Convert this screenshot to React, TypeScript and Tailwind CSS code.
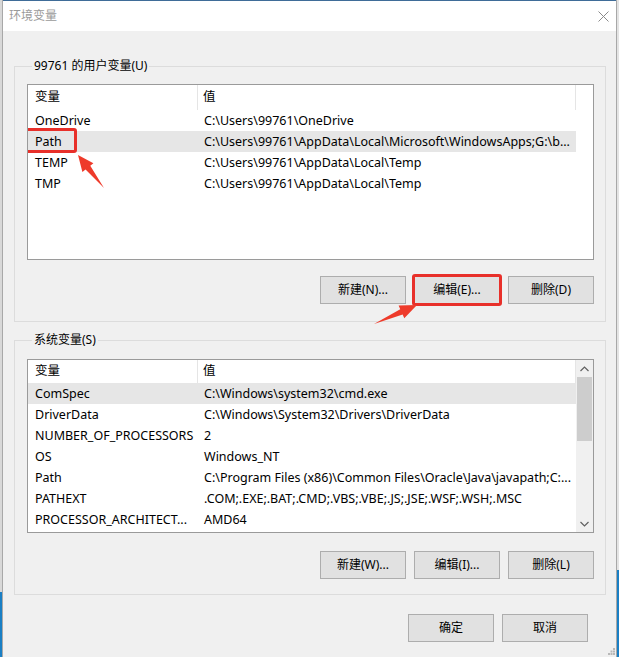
const userVars = [
  ["OneDrive", "C:\\Users\\99761\\OneDrive"],
  ["Path", "C:\\Users\\99761\\AppData\\Local\\Microsoft\\WindowsApps;G:\\b..."],
  ["TEMP", "C:\\Users\\99761\\AppData\\Local\\Temp"],
  ["TMP", "C:\\Users\\99761\\AppData\\Local\\Temp"],
];

const sysVars = [
  ["ComSpec", "C:\\Windows\\system32\\cmd.exe"],
  ["DriverData", "C:\\Windows\\System32\\Drivers\\DriverData"],
  ["NUMBER_OF_PROCESSORS", "2"],
  ["OS", "Windows_NT"],
  ["Path", "C:\\Program Files (x86)\\Common Files\\Oracle\\Java\\javapath;C:..."],
  ["PATHEXT", ".COM;.EXE;.BAT;.CMD;.VBS;.VBE;.JS;.JSE;.WSF;.WSH;.MSC"],
  ["PROCESSOR_ARCHITECT...", "AMD64"],
];

const font = { fontFamily: '"Noto Sans", "Noto Sans CJK SC", sans-serif' };

function arrow(tx: number, ty: number, px: number, py: number, h: number, hw: number, sw: number) {
  const len = Math.hypot(px - tx, py - ty);
  const dx = (px - tx) / len;
  const dy = (py - ty) / len;
  const nx = -dy;
  const ny = dx;
  const bx = px - dx * h;
  const by = py - dy * h;
  const pts = [
    [tx, ty],
    [bx + nx * sw, by + ny * sw],
    [bx + nx * hw, by + ny * hw],
    [px, py],
    [bx - nx * hw, by - ny * hw],
    [bx - nx * sw, by - ny * sw],
  ];
  return pts.map((p) => p.join(",")).join(" ");
}

function Btn({ label, boxed }: { label: string; boxed?: boolean }) {
  return (
    <div className="relative">
      <button className="w-[86px] h-[28px] bg-[#e1e1e1] border border-[#adadad] text-[12px] text-black leading-none">{label}</button>
      {boxed && <div className="absolute -inset-[2px] border-[3px] border-[#e8302a] rounded-[3px] pointer-events-none" />}
    </div>
  );
}

function VarList({ rows, height, headerH, scroll, selected, marked }: { rows: string[][]; height: string; headerH: string; scroll?: boolean; selected: number; marked?: number }) {
  return (
    <div className={`${height} bg-white border border-[#9a9a9a] flex overflow-hidden`}>
      <div className="w-[548px] flex flex-col">
        <div className={`${headerH} flex text-[12.5px] text-black`}>
          <div className="w-[170px] pl-[7px] border-r border-[#e5e5e5] flex items-center">变量</div>
          <div className="w-[378px] pl-[5px] border-r border-[#e5e5e5] flex items-center">值</div>
        </div>
        {rows.map(([k, v], i) => (
          <div key={k + i} className={`h-[21px] shrink-0 flex text-[12.5px] leading-[21px] text-black whitespace-nowrap ${i === selected ? "bg-[#e6e6e6]" : ""}`}>
            <div className="w-[170px] pl-[7px] relative">
              {k}
              {i === marked && <div className="absolute left-[-6px] top-[-3px] w-[55px] h-[25px] border-[3px] border-[#e8302a] rounded-[3px]" />}
            </div>
            <div className="w-[378px] pl-[6px] overflow-hidden">{v}</div>
          </div>
        ))}
      </div>
      <div className="w-[17px] flex flex-col">
        {scroll && (
          <div className="flex-1 bg-[#f0f0f0] flex flex-col">
            <div className="h-[17px] flex items-center justify-center">
              <svg width="9" height="6" viewBox="0 0 9 6"><path d="M0.5 5 L4.5 1 L8.5 5" fill="none" stroke="#606060" strokeWidth="1.2" /></svg>
            </div>
            <div className="h-[64px] mx-[1px] bg-[#cdcdcd]" />
            <div className="flex-1" />
            <div className="h-[17px] flex items-center justify-center">
              <svg width="9" height="6" viewBox="0 0 9 6"><path d="M0.5 1 L4.5 5 L8.5 1" fill="none" stroke="#606060" strokeWidth="1.2" /></svg>
            </div>
          </div>
        )}
      </div>
    </div>
  );
}

export default function App() {
  return (
    <div className="w-[619px] h-[657px] flex overflow-hidden relative" style={font}>
      <div className="w-[2px] flex flex-col">
        <div className="flex-1 bg-[#d8d8d8]" />
        <div className="h-[65px] bg-[#1a7fc4]" />
      </div>
      <div className="flex-1 flex flex-col bg-[#f0f0f0] border-l border-r border-[#a8a8a8] relative">
        <div className="h-[31px] bg-white border-t border-[#3f6c98] flex items-center justify-between">
          <span className="pl-[6px] text-[12px] text-[#9a9a9a]">环境变量</span>
          <svg className="mr-[7px]" width="11" height="11" viewBox="0 0 11 11"><path d="M0.5 0.5 L10.5 10.5 M10.5 0.5 L0.5 10.5" stroke="#8a8a8a" strokeWidth="1" /></svg>
        </div>
        <div className="pl-[11px] pr-[10px] pt-[28px] flex flex-col">
          <fieldset className="border border-[#dcdcdc] pl-[12px] pr-[11px] pb-[17px]">
            <legend className="ml-[5px] px-[2px] text-[12px] leading-[14px] text-black">99761 的用户变量(U)</legend>
            <div className="mt-[11px]">
              <VarList rows={userVars} height="h-[176px]" headerH="h-[25px]" selected={1} marked={1} />
            </div>
            <div className="mt-[16px] flex justify-end gap-[8px]">
              <Btn label="新建(N)..." />
              <Btn label="编辑(E)..." boxed />
              <Btn label="删除(D)" />
            </div>
          </fieldset>
          <fieldset className="mt-[11px] border border-[#dcdcdc] pl-[12px] pr-[11px] pb-[15px]">
            <legend className="ml-[5px] px-[2px] text-[12px] leading-[14px] text-black">系统变量(S)</legend>
            <div className="mt-[12px]">
              <VarList rows={sysVars} height="h-[174px]" headerH="h-[23px] shrink-0" selected={0} scroll />
            </div>
            <div className="mt-[18px] flex justify-end gap-[8px]">
              <Btn label="新建(W)..." />
              <Btn label="编辑(I)..." />
              <Btn label="删除(L)" />
            </div>
          </fieldset>
          <div className="mt-[19px] pr-[18px] flex justify-end gap-[8px]">
            <Btn label="确定" />
            <Btn label="取消" />
          </div>
        </div>
        <svg className="absolute right-[1px] bottom-[2px]" width="7" height="7" viewBox="0 0 7 7">
          <rect x="5" y="0" width="2" height="2" fill="#b8b8b8" />
          <rect x="2.5" y="2.5" width="2" height="2" fill="#b8b8b8" />
          <rect x="5" y="2.5" width="2" height="2" fill="#b8b8b8" />
          <rect x="0" y="5" width="2" height="2" fill="#b8b8b8" />
          <rect x="2.5" y="5" width="2" height="2" fill="#b8b8b8" />
          <rect x="5" y="5" width="2" height="2" fill="#b8b8b8" />
        </svg>
      </div>
      <div className="w-[2px] flex flex-col">
        <div className="flex-1 bg-[#e4e4e4]" />
        <div className="h-[87px] bg-[#1a7fc4]" />
      </div>
      <svg className="absolute left-0 top-0 pointer-events-none" width="619" height="657">
        <polygon points={arrow(104, 188, 78, 155, 16, 7, 3)} fill="#ee3b2b" />
        <polygon points={arrow(374, 324, 417, 305, 17, 7, 3)} fill="#ee3b2b" />
      </svg>
    </div>
  );
}
